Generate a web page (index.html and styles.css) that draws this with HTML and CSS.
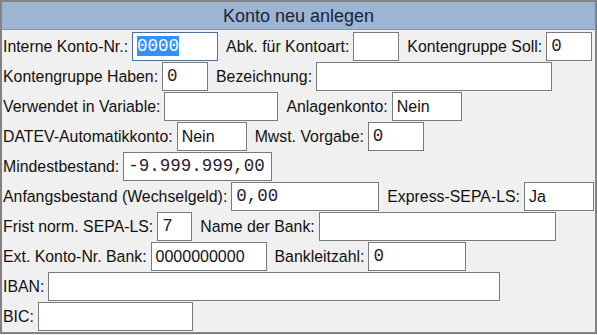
FILE: index.html
```html
<!DOCTYPE html>
<html lang="de">
<head>
    <meta charset="UTF-8">
    <meta name="viewport" content="width=device-width, initial-scale=1.0">
    <title>Konto neu anlegen</title>
    <link rel="stylesheet" href="styles.css">
</head>
<body>
    <div class="fenster">
        <div class="titel">Konto neu anlegen</div>
        <div class="formular">
            <div class="zeile">
                <span class="beschriftung">Interne Konto-Nr.:</span>
                <span class="feld mono fokus w86"><span class="markiert">0000</span></span>
                <span class="beschriftung">Abk. für Kontoart:</span>
                <span class="feld w46"></span>
                <span class="beschriftung">Kontengruppe Soll:</span>
                <span class="feld mono w46">0</span>
            </div>
            <div class="zeile">
                <span class="beschriftung">Kontengruppe Haben:</span>
                <span class="feld mono w46">0</span>
                <span class="beschriftung">Bezeichnung:</span>
                <span class="feld w236"></span>
            </div>
            <div class="zeile">
                <span class="beschriftung">Verwendet in Variable:</span>
                <span class="feld w114"></span>
                <span class="beschriftung">Anlagenkonto:</span>
                <span class="feld w70">Nein</span>
            </div>
            <div class="zeile">
                <span class="beschriftung">DATEV-Automatikkonto:</span>
                <span class="feld w70">Nein</span>
                <span class="beschriftung">Mwst. Vorgabe:</span>
                <span class="feld mono w56">0</span>
            </div>
            <div class="zeile">
                <span class="beschriftung">Mindestbestand:</span>
                <span class="feld mono w149">-9.999.999,00</span>
            </div>
            <div class="zeile">
                <span class="beschriftung">Anfangsbestand (Wechselgeld):</span>
                <span class="feld mono w148">0,00</span>
                <span class="beschriftung">Express-SEPA-LS:</span>
                <span class="feld w70">Ja</span>
            </div>
            <div class="zeile">
                <span class="beschriftung">Frist norm. SEPA-LS:</span>
                <span class="feld mono w35">7</span>
                <span class="beschriftung">Name der Bank:</span>
                <span class="feld w237"></span>
            </div>
            <div class="zeile">
                <span class="beschriftung">Ext. Konto-Nr. Bank:</span>
                <span class="feld w116">0000000000</span>
                <span class="beschriftung">Bankleitzahl:</span>
                <span class="feld mono w98">0</span>
            </div>
            <div class="zeile">
                <span class="beschriftung">IBAN:</span>
                <span class="feld w452"></span>
            </div>
            <div class="zeile">
                <span class="beschriftung">BIC:</span>
                <span class="feld w155"></span>
            </div>
        </div>
    </div>
</body>
</html>
```

FILE: styles.css
```css
body {
    margin: 0;
    padding: 0;
    font-family: "Liberation Sans", Arial, sans-serif;
    background-color: #f0f0f0;
}
.fenster {
    width: 597px;
    height: 334px;
    box-sizing: border-box;
    border: 2px solid #838383;
    background-color: #f0f0f0;
    overflow: hidden;
}
.titel {
    height: 27px;
    line-height: 29px;
    background-color: #9cb5d3;
    border-bottom: 1px solid #8a97a8;
    text-align: center;
    font-size: 18px;
    color: #17243a;
}
.formular {
    display: flex;
    flex-direction: column;
    gap: 1px;
    padding: 2px 0 0 1px;
}
.zeile {
    display: flex;
    align-items: center;
    height: 29px;
    white-space: nowrap;
}
.beschriftung {
    font-size: 15.85px;
    color: #111;
    margin-right: 4px;
}
.feld {
    box-sizing: border-box;
    height: 29px;
    flex-shrink: 0;
    margin-right: 8px;
    padding: 0 4px;
    background-color: #fff;
    border: 1px solid #7a7a7a;
    font-size: 16px;
    line-height: 27px;
    color: #111;
}
.mono {
    font-family: "Liberation Mono", "DejaVu Sans Mono", monospace;
    font-size: 17.5px;
    color: #2a2030;
}
.fokus {
    border-color: #4d6f99;
}
.markiert {
    background-color: #3390ff;
    color: #fff;
}
.w35 { width: 35px; }
.w46 { width: 46px; }
.w56 { width: 56px; }
.w70 { width: 70px; }
.w86 { width: 86px; }
.w98 { width: 98px; }
.w114 { width: 114px; }
.w116 { width: 116px; }
.w148 { width: 148px; }
.w149 { width: 149px; }
.w155 { width: 155px; }
.w236 { width: 236px; }
.w237 { width: 237px; }
.w452 { width: 452px; }
```
